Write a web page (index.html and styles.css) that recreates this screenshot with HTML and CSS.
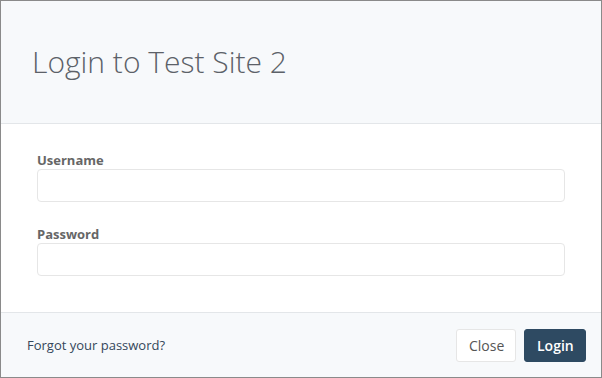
FILE: index.html
```html
<!DOCTYPE html>
<html>
<head>
<meta charset="utf-8">
<link rel="stylesheet" href="styles.css">
</head>
<body>
<div class="modal">
  <div class="modal-header">
    <h1 class="modal-title">Login to Test Site 2</h1>
  </div>
  <div class="modal-body">
    <div class="field">
      <label class="field-label">Username</label>
      <div class="field-input"></div>
    </div>
    <div class="field">
      <label class="field-label">Password</label>
      <div class="field-input"></div>
    </div>
  </div>
  <div class="modal-footer">
    <span class="forgot">Forgot your password?</span>
    <div class="actions">
      <button class="btn btn-default">Close</button>
      <button class="btn btn-primary">Login</button>
    </div>
  </div>
</div>
</body>
</html>
```

FILE: styles.css
```css
html, body {
  margin: 0;
  padding: 0;
  background: #8a8a8a;
}
body {
  font-family: "Open Sans", "Liberation Sans", sans-serif;
  width: 602px;
  height: 378px;
  overflow: hidden;
}
.modal {
  margin: 1px 0 0 1px;
  width: 600px;
  height: 376px;
  background: #fff;
  display: flex;
  flex-direction: column;
}
.modal-header {
  background: #f7f9fb;
  height: 122px;
  border-bottom: 1px solid #e3e6e9;
  display: flex;
  align-items: center;
  padding-left: 31px;
}
.modal-title {
  margin: 0;
  font-size: 30px;
  font-weight: 300;
  color: #5c6168;
  line-height: 40px;
}
.modal-body {
  height: 188px;
  padding: 28px 36px 0 36px;
  box-sizing: border-box;
}
.field {
  display: flex;
  flex-direction: column;
  margin-bottom: 24px;
}
.field-label {
  font-size: 13px;
  font-weight: 700;
  color: #666;
  line-height: 16px;
  margin-bottom: 1px;
}
.field-input {
  height: 31px;
  border: 1px solid #e6e6e6;
  border-radius: 4px;
  background: #fff;
}
.modal-footer {
  flex: 1;
  background: #f7f9fb;
  border-top: 1px solid #e3e6e9;
  display: flex;
  align-items: center;
  justify-content: space-between;
  padding: 0 15px 0 26px;
}
.forgot {
  font-size: 13px;
  color: #34475a;
}
.actions {
  display: flex;
  gap: 8px;
}
.btn {
  font-family: "Open Sans", "Liberation Sans", sans-serif;
  font-size: 14px;
  height: 33px;
  border-radius: 3px;
  padding: 0 12px;
  cursor: pointer;
}
.btn-default {
  background: #fff;
  border: 1px solid #e6e6e6;
  color: #555;
  width: 60px;
}
.btn-primary {
  background: #2e4a62;
  border: 1px solid #2e4a62;
  color: #fff;
  font-weight: 600;
  width: 62px;
}
```
